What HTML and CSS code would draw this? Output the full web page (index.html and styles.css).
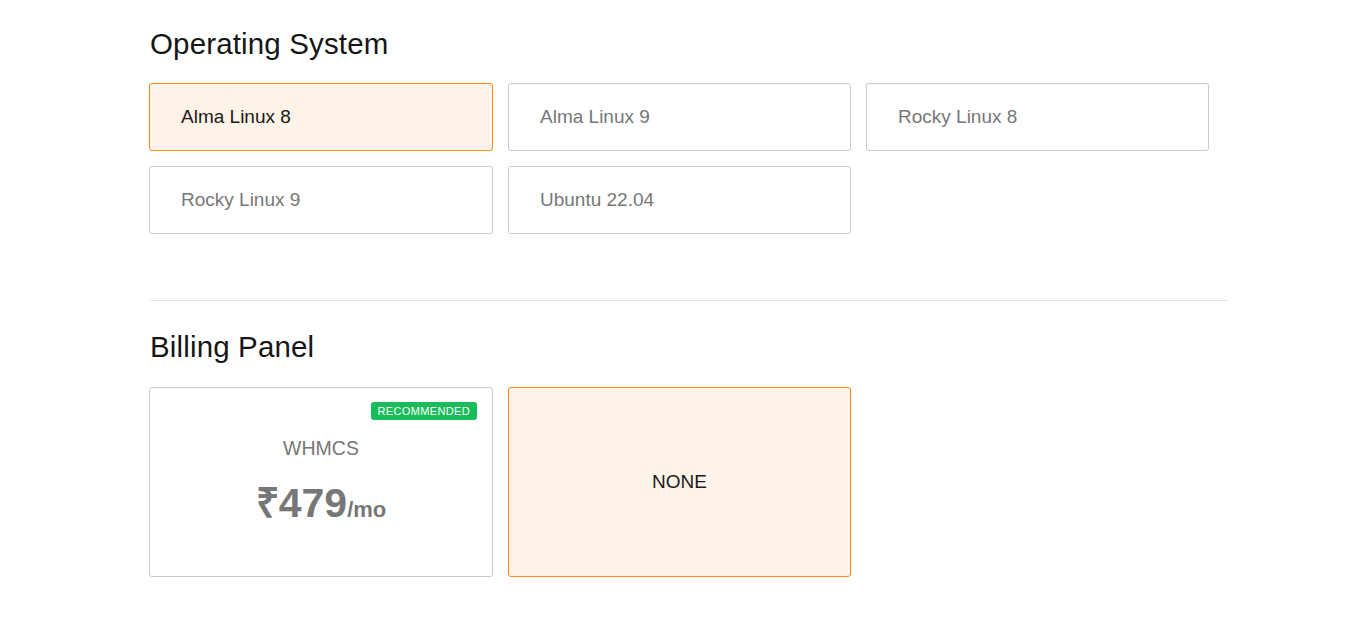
FILE: index.html
```html
<!DOCTYPE html>
<html>
<head>
<meta charset="utf-8">
<link rel="stylesheet" href="styles.css">
</head>
<body>
<main class="wrap">
  <section class="section">
    <h2 class="title">Operating System</h2>
    <div class="grid">
      <div class="opt selected">Alma Linux 8</div>
      <div class="opt">Alma Linux 9</div>
      <div class="opt">Rocky Linux 8</div>
      <div class="opt">Rocky Linux 9</div>
      <div class="opt">Ubuntu 22.04</div>
    </div>
  </section>
  <hr class="divider">
  <section class="section billing">
    <h2 class="title">Billing Panel</h2>
    <div class="grid">
      <div class="panel">
        <span class="badge">RECOMMENDED</span>
        <div class="panel-name">WHMCS</div>
        <div class="price">₹479<span class="per">/mo</span></div>
      </div>
      <div class="panel selected centered">
        <div class="panel-none">NONE</div>
      </div>
    </div>
  </section>
</main>
</body>
</html>
```

FILE: styles.css
```css
* { box-sizing: border-box; }
body {
  margin: 0;
  background: #fff;
  font-family: "Liberation Sans", Arial, sans-serif;
  color: #1c1c1c;
}
.wrap {
  width: 1079px;
  margin-left: 149px;
  padding-top: 26px;
}
.title {
  margin: 0 0 21px 1px;
  font-weight: 400;
  font-size: 29.5px;
  line-height: 36px;
  color: #161616;
  letter-spacing: 0.15px;
}
.grid {
  display: grid;
  grid-template-columns: 344px 343px 343px;
  gap: 15px;
}
.opt {
  height: 68px;
  border: 1px solid #cacaca;
  border-radius: 3px;
  display: flex;
  align-items: center;
  padding-left: 31px;
  font-size: 19px;
  color: #777;
}
.opt.selected, .panel.selected {
  border-color: #f98b1f;
  background: #fef3e8;
  color: #1a1a1a;
}
.divider {
  border: 0;
  border-top: 1px solid #e4e4e4;
  margin: 66px 0 0 1px;
}
.billing { padding-top: 28px; }
.billing .title { margin-bottom: 22px; }
.panel {
  position: relative;
  height: 190px;
  border: 1px solid #cacaca;
  border-radius: 3px;
  display: flex;
  flex-direction: column;
  align-items: center;
  padding-top: 49px;
  color: #777;
}
.panel.centered {
  justify-content: center;
  padding-top: 0;
}
.badge {
  position: absolute;
  top: 14px;
  right: 15px;
  background: #18bc5a;
  color: #fff;
  font-size: 11px;
  line-height: 18px;
  padding: 0 7px;
  border-radius: 3px;
  letter-spacing: 0.35px;
}
.panel-name {
  font-size: 19.5px;
  line-height: 22px;
}
.price {
  font-size: 41px;
  font-weight: 700;
  line-height: 44px;
  margin-top: 22px;
}
.per {
  font-size: 22px;
}
.panel-none {
  font-size: 19px;
}
```
